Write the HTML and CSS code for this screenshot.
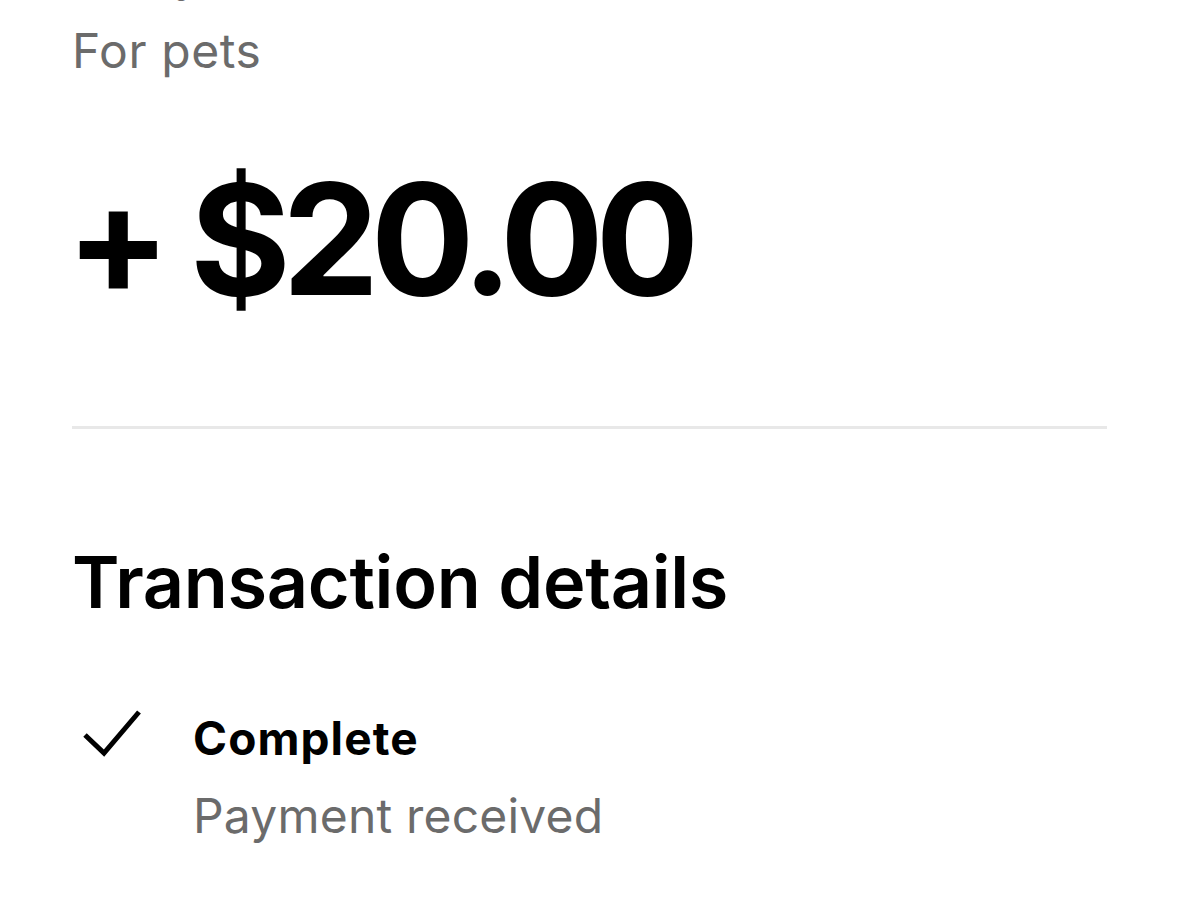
FILE: index.html
```html
<!DOCTYPE html>
<html>
<head>
<meta charset="utf-8">
<link rel="stylesheet" href="styles.css">
</head>
<body>
<main class="screen">
  <header class="head">
    <div class="from">Kathy</div>
    <div class="note">For pets</div>
  </header>
  <div class="amount">+ $20.00</div>
  <hr class="divider">
  <section class="details">
    <h2 class="details-title">Transaction details</h2>
    <div class="status">
      <svg class="check" viewBox="0 0 60 48" width="60" height="48">
        <path d="M3 26 L22 44 L57 3" fill="none" stroke="#000" stroke-width="5"/>
      </svg>
      <div class="status-text">
        <div class="status-title">Complete</div>
        <div class="status-sub">Payment received</div>
      </div>
    </div>
  </section>
</main>
</body>
</html>
```

FILE: styles.css
```css
html, body {
  margin: 0;
  padding: 0;
  background: #fff;
  overflow: hidden;
}
body {
  font-family: Inter, "Noto Sans", "Liberation Sans", sans-serif;
  color: #000;
}
.screen {
  padding: 0 72px;
  width: 1179px;
  box-sizing: border-box;
}
.head {
  margin-top: -55px;
}
.from {
  font-size: 48px;
  line-height: 58px;
  color: #6b6b6b;
  margin-bottom: 19px;
}
.note {
  font-size: 48px;
  line-height: 58px;
  color: #6b6b6b;
  letter-spacing: 0.6px;
}
.amount {
  margin: 64px 0 0 -6px;
  font-size: 154px;
  font-weight: 700;
  line-height: 190px;
  letter-spacing: -8.5px;
}
.divider {
  border: 0;
  height: 3px;
  background: #e8e8e8;
  margin: 92px 0 0 0;
}
.details-title {
  margin: 109px 0 0 0;
  font-size: 72px;
  font-weight: 600;
  line-height: 88px;
  letter-spacing: -0.3px;
}
.status {
  display: flex;
  align-items: flex-start;
  margin-top: 84px;
}
.check {
  flex: none;
  margin: -1px 0 0 10px;
}
.status-text {
  margin: 0 0 0 51px;
}
.status-title {
  font-size: 46px;
  font-weight: 700;
  line-height: 56px;
  letter-spacing: 1.1px;
}
.status-sub {
  font-size: 48px;
  line-height: 60px;
  color: #6b6b6b;
  margin-top: 20px;
  letter-spacing: 0.2px;
}
```
